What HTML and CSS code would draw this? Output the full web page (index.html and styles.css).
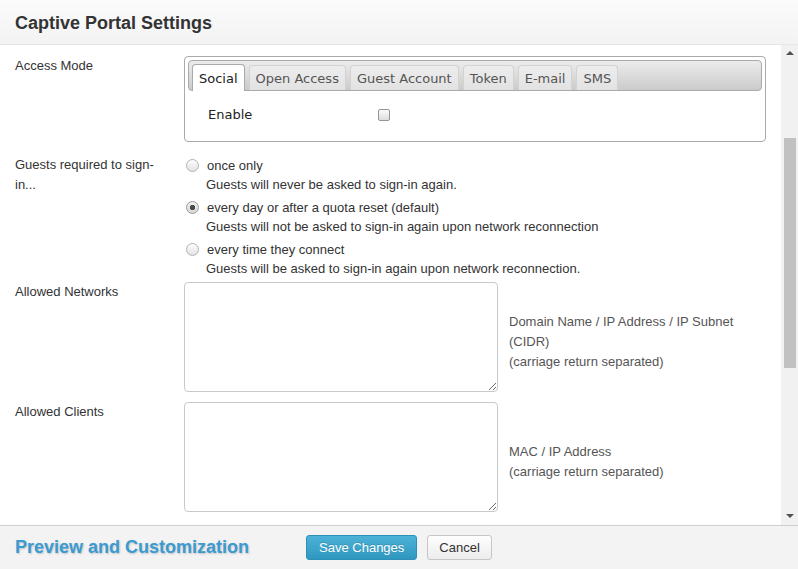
FILE: index.html
```html
<!DOCTYPE html>
<html lang="en">
<head>
<meta charset="UTF-8">
<title>Captive Portal Settings</title>
<link rel="stylesheet" href="styles.css">
</head>
<body>
<header class="top">
  <h1>Captive Portal Settings</h1>
</header>

<div class="main">
  <div class="content">

    <!-- ---------- ACCESS MODE ---------- -->
    <div class="row row-tabs">
      <div class="label">Access Mode</div>
      <div class="field">
        <div class="tabs">
          <ul class="tab-nav">
            <li class="active">Social</li>
            <li>Open Access</li>
            <li>Guest Account</li>
            <li>Token</li>
            <li>E-mail</li>
            <li>SMS</li>
          </ul>
          <div class="tab-panel">
            <span class="panel-label">Enable</span>
            <input type="checkbox" class="check">
          </div>
        </div>
      </div>
    </div>

    <!-- ---------- SIGN-IN ---------- -->
    <div class="row row-radio">
      <div class="label">Guests required to sign-in...</div>
      <div class="field options">
        <div class="option">
          <label><input type="radio" name="signin" class="radio">once only</label>
          <div class="desc">Guests will never be asked to sign-in again.</div>
        </div>
        <div class="option">
          <label><input type="radio" name="signin" class="radio" checked>every day or after a quota reset (default)</label>
          <div class="desc">Guests will not be asked to sign-in again upon network reconnection</div>
        </div>
        <div class="option">
          <label><input type="radio" name="signin" class="radio">every time they connect</label>
          <div class="desc">Guests will be asked to sign-in again upon network reconnection.</div>
        </div>
      </div>
    </div>

    <!-- ---------- NETWORKS / CLIENTS ---------- -->
    <div class="row">
      <div class="label">Allowed Networks</div>
      <div class="field area-field">
        <textarea class="area"></textarea>
        <div class="help">Domain Name / IP Address / IP Subnet (CIDR)<br>(carriage return separated)</div>
      </div>
    </div>

    <div class="row">
      <div class="label">Allowed Clients</div>
      <div class="field area-field">
        <textarea class="area"></textarea>
        <div class="help">MAC / IP Address<br>(carriage return separated)</div>
      </div>
    </div>

  </div>

  <div class="scrollbar">
    <span class="arrow arrow-up"></span>
    <span class="thumb"></span>
    <span class="arrow arrow-down"></span>
  </div>
</div>

<footer class="bottom">
  <h2>Preview and Customization</h2>
  <div class="buttons">
    <button class="btn btn-primary">Save Changes</button>
    <button class="btn">Cancel</button>
  </div>
</footer>
</body>
</html>
```

FILE: styles.css
```css
/* ---------- GLOBAL ---------- */
html,body{margin:0;padding:0;background:#fff;color:#333;font-family:"Liberation Sans",Arial,sans-serif;font-size:13px;}
body{height:569px;overflow:hidden;display:flex;flex-direction:column;}

/* ---------- HEADER ---------- */
.top{height:42px;flex:none;display:flex;align-items:center;padding:2px 15px 0;background:linear-gradient(#fbfbfb,#f3f3f3);border-bottom:1px solid #e6e6e6;}
.top h1{margin:0;font-size:18px;font-weight:bold;color:#333;}

/* ---------- MAIN ---------- */
.main{height:480px;flex:none;display:flex;}
.content{flex:1;overflow:hidden;padding-top:11px;}

.row{display:flex;margin-bottom:10px;}
.row-tabs{margin-bottom:13px;}
.row-radio{margin-bottom:3px;}
.label{width:150px;padding:0 19px 0 15px;line-height:20px;flex:none;}
.field{flex:1;min-width:0;}

/* ---------- TABS ---------- */
.tabs{width:574px;border:1px solid #aaa;border-radius:4px;padding:3px;font-family:"DejaVu Sans",Verdana,sans-serif;font-size:13px;}
.tab-nav{list-style:none;margin:0;padding:0 2px 0 3px;height:29px;display:flex;align-items:flex-end;border:1px solid #aaa;border-radius:4px;background:linear-gradient(#ececec,#cbcbcb);}
.tab-nav li{height:24px;line-height:25px;padding:0 6px;margin-right:4px;color:#555;background:linear-gradient(#ededed,#e2e2e2);border:1px solid #d3d3d3;border-bottom:0;border-radius:4px 4px 0 0;}
.tab-nav li.active{height:26px;line-height:27px;margin-bottom:-1px;color:#212121;background:#fff;border-color:#aaa;}
.tab-panel{display:flex;align-items:center;padding:14px 20px 13px 20px;line-height:20px;color:#222;}
.panel-label{width:170px;}
.check{appearance:none;-webkit-appearance:none;margin:0;width:12px;height:12px;border:1px solid #949494;border-radius:2px;background:linear-gradient(#fcfcfc,#dcdcdc);}

/* ---------- RADIO OPTIONS ---------- */
.options{display:flex;flex-direction:column;gap:2px;}
.option label{display:flex;align-items:center;height:20px;}
.desc{padding-left:22px;line-height:20px;}
.radio{appearance:none;-webkit-appearance:none;margin:0 8px 0 2px;width:13px;height:13px;border:1px solid #b2b2b2;border-radius:50%;background:linear-gradient(#fdfdfd,#e3e3e3);}
.radio:checked{background:radial-gradient(circle,#4a4a4a 0 2.4px,transparent 3px),linear-gradient(#f0f0f0,#d8d8d8);border-color:#9a9a9a;}

/* ---------- TEXTAREAS ---------- */
.area-field{display:flex;align-items:center;}
.area{width:314px;height:110px;box-sizing:border-box;margin:0;border:1px solid #c9c9c9;border-radius:4px;flex:none;font-family:inherit;}
.help{width:240px;margin-left:11px;padding-top:9px;line-height:20px;color:#555;}

/* ---------- SCROLLBAR ---------- */
.scrollbar{width:17px;flex:none;background:#f1f1f1;position:relative;}
.thumb{position:absolute;top:93px;left:3px;width:12px;height:230px;background:#c1c1c1;}
.arrow{position:absolute;left:5px;width:0;height:0;border-left:4px solid transparent;border-right:4px solid transparent;}
.arrow-up{top:6px;border-bottom:4px solid #505050;}
.arrow-down{bottom:7px;border-top:4px solid #505050;}

/* ---------- FOOTER ---------- */
.bottom{height:43px;flex:none;display:flex;align-items:center;padding:0 15px;background:#f3f3f3;border-top:1px solid #cfcfcf;}
.bottom h2{margin:0 57px 0 0;font-size:18px;font-weight:bold;color:#3a9ad2;text-shadow:1px 1px 2px rgba(0,0,0,.2);}
.buttons{display:flex;gap:10px;}
.btn{height:25px;padding:0 11px;white-space:nowrap;font-family:"Liberation Sans",Arial,sans-serif;font-size:13px;color:#333;background:linear-gradient(#fefefe,#ececec);border:1px solid #c6c6c6;border-radius:3px;}
.btn-primary{padding:0 12px;color:#fff;background:linear-gradient(#4db2d8,#2f97bf);border-color:#2c8fb6;text-shadow:0 -1px 0 rgba(0,0,0,.15);}
```
